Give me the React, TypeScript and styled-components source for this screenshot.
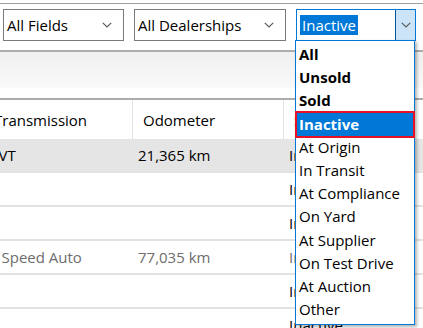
import React from 'react';
import styled, { createGlobalStyle } from 'styled-components';

const Global = createGlobalStyle`
  html, body { margin: 0; padding: 0; background: #fff; }
  body {
    font-family: "Open Sans", "Noto Sans", sans-serif;
    font-size: 15px;
    color: #000;
    width: 423px;
    height: 328px;
    overflow: hidden;
  }
`;

const Page = styled.div`
  position: relative;
  width: 423px;
  height: 328px;
  overflow: hidden;
  background: #fff;
`;

const TopRule = styled.div`
  margin-top: 3px;
  height: 1px;
  background: #a0a0a0;
`;

const FilterBar = styled.div`
  display: flex;
  gap: 10px;
  padding: 5px 0 0 3px;
  height: 32px;
`;

const Combo = styled.div<{ $w: number; $focused?: boolean }>`
  width: ${p => p.$w}px;
  height: 32px;
  box-sizing: border-box;
  border: 1px solid ${p => (p.$focused ? '#0078d7' : '#7a7a7a')};
  display: flex;
  align-items: center;
  background: #fff;
`;

const ComboText = styled.span`
  flex: 1;
  padding-left: 3px;
  white-space: nowrap;
  line-height: 20px;
`;

const SelectedText = styled.span`
  background: #0078d7;
  color: #fff;
  padding: 0 2px;
  line-height: 20px;
  display: inline-block;
`;

const ChevronBox = styled.span<{ $active?: boolean }>`
  width: ${p => (p.$active ? '20px' : '24px')};
  align-self: stretch;
  display: flex;
  align-items: center;
  justify-content: center;
  box-sizing: border-box;
  background: ${p => (p.$active ? '#cce4f7' : 'transparent')};
  border-left: ${p => (p.$active ? '1px solid #005499' : 'none')};
  margin-right: ${p => (p.$active ? '0' : '4px')};
`;

const Spacer = styled.div`
  height: 9px;
`;

const Rule = styled.div`
  height: 2px;
  background: #acacac;
`;

const Band = styled.div`
  height: 46px;
  background: linear-gradient(to bottom, #efefef 0px, #f9f9f9 36px, #ffffff 36px);
`;

const TableClip = styled.div`
  overflow: hidden;
`;

const Grid = styled.div`
  display: grid;
  grid-template-columns: 149px 151px 200px;
  margin-left: -16px;
`;

const HeadCell = styled.div<{ $last?: boolean }>`
  height: 39px;
  display: flex;
  align-items: center;
  padding-left: 10px;
  white-space: nowrap;
  overflow: hidden;
  box-shadow: ${p => (p.$last ? 'none' : 'inset -1px 0 0 #e3e3e3')};
`;

const Row = styled.div<{ $sel?: boolean; $dim?: boolean }>`
  display: contents;
  & > div {
    background: ${p => (p.$sel ? '#e5e5e5' : '#fff')};
    color: ${p => (p.$dim ? '#6d6d6d' : '#000')};
  }
`;

const Cell = styled.div`
  height: 32px;
  border-bottom: 2px solid #e2e2e2;
  display: flex;
  align-items: center;
  padding-left: 5px;
  white-space: nowrap;
  overflow: hidden;
`;

const List = styled.ul`
  position: absolute;
  left: 295px;
  top: 40px;
  width: 120px;
  box-sizing: border-box;
  margin: 0;
  padding: 2px 0 3px;
  list-style: none;
  background: #fff;
  border: 1px solid #0078d7;
  box-shadow: 2px 2px 3px rgba(0, 0, 0, 0.3);
`;

const Item = styled.li<{ $bold?: boolean; $active?: boolean }>`
  position: relative;
  height: 23.2px;
  line-height: 23.2px;
  padding-left: 3px;
  white-space: nowrap;
  font-weight: ${p => (p.$bold ? 700 : 400)};
  background: ${p => (p.$active ? '#0078d7' : 'transparent')};
  color: ${p => (p.$active ? '#fff' : '#000')};
  &::after {
    content: '';
    display: ${p => (p.$active ? 'block' : 'none')};
    position: absolute;
    left: -1px;
    right: -1px;
    top: -2px;
    bottom: -2px;
    border: 2px solid #e81123;
  }
`;

const Chevron = () => (
  <svg width="10" height="6" viewBox="0 0 10 6">
    <polyline points="0.8,0.8 5,5 9.2,0.8" fill="none" stroke="#5a5a5a" strokeWidth="1.2" />
  </svg>
);

const rows = [
  { t: 'CVT', o: '21,365 km', s: 'Inactive', sel: true },
  { t: '', o: '', s: 'Inactive' },
  { t: '', o: '', s: 'Inactive' },
  { t: '6 Speed Auto', o: '77,035 km', s: 'Inactive', dim: true },
  { t: '', o: '', s: 'Inactive' },
  { t: '', o: '', s: 'Inactive' },
];

const options: { label: string; bold?: boolean }[] = [
  { label: 'All', bold: true },
  { label: 'Unsold', bold: true },
  { label: 'Sold', bold: true },
  { label: 'Inactive', bold: true },
  { label: 'At Origin' },
  { label: 'In Transit' },
  { label: 'At Compliance' },
  { label: 'On Yard' },
  { label: 'At Supplier' },
  { label: 'On Test Drive' },
  { label: 'At Auction' },
  { label: 'Other' },
];

export default function App() {
  return (
    <Page>
      <Global />
      <TopRule />
      <FilterBar>
        <Combo $w={121}>
          <ComboText>All Fields</ComboText>
          <ChevronBox><Chevron /></ChevronBox>
        </Combo>
        <Combo $w={152}>
          <ComboText>All Dealerships</ComboText>
          <ChevronBox><Chevron /></ChevronBox>
        </Combo>
        <Combo $w={120} $focused>
          <ComboText><SelectedText>Inactive</SelectedText></ComboText>
          <ChevronBox $active><Chevron /></ChevronBox>
        </Combo>
      </FilterBar>
      <Spacer />
      <Rule />
      <Band />
      <Rule />
      <TableClip>
        <Grid>
          <HeadCell>Transmission</HeadCell>
          <HeadCell>Odometer</HeadCell>
          <HeadCell $last>Status</HeadCell>
          {rows.map((r, i) => (
            <Row key={i} $sel={r.sel} $dim={r.dim}>
              <Cell>{r.t}</Cell>
              <Cell>{r.o}</Cell>
              <Cell>{r.s}</Cell>
            </Row>
          ))}
        </Grid>
      </TableClip>
      <List>
        {options.map(o => (
          <Item key={o.label} $bold={o.bold} $active={o.label === 'Inactive'}>
            {o.label}
          </Item>
        ))}
      </List>
    </Page>
  );
}
